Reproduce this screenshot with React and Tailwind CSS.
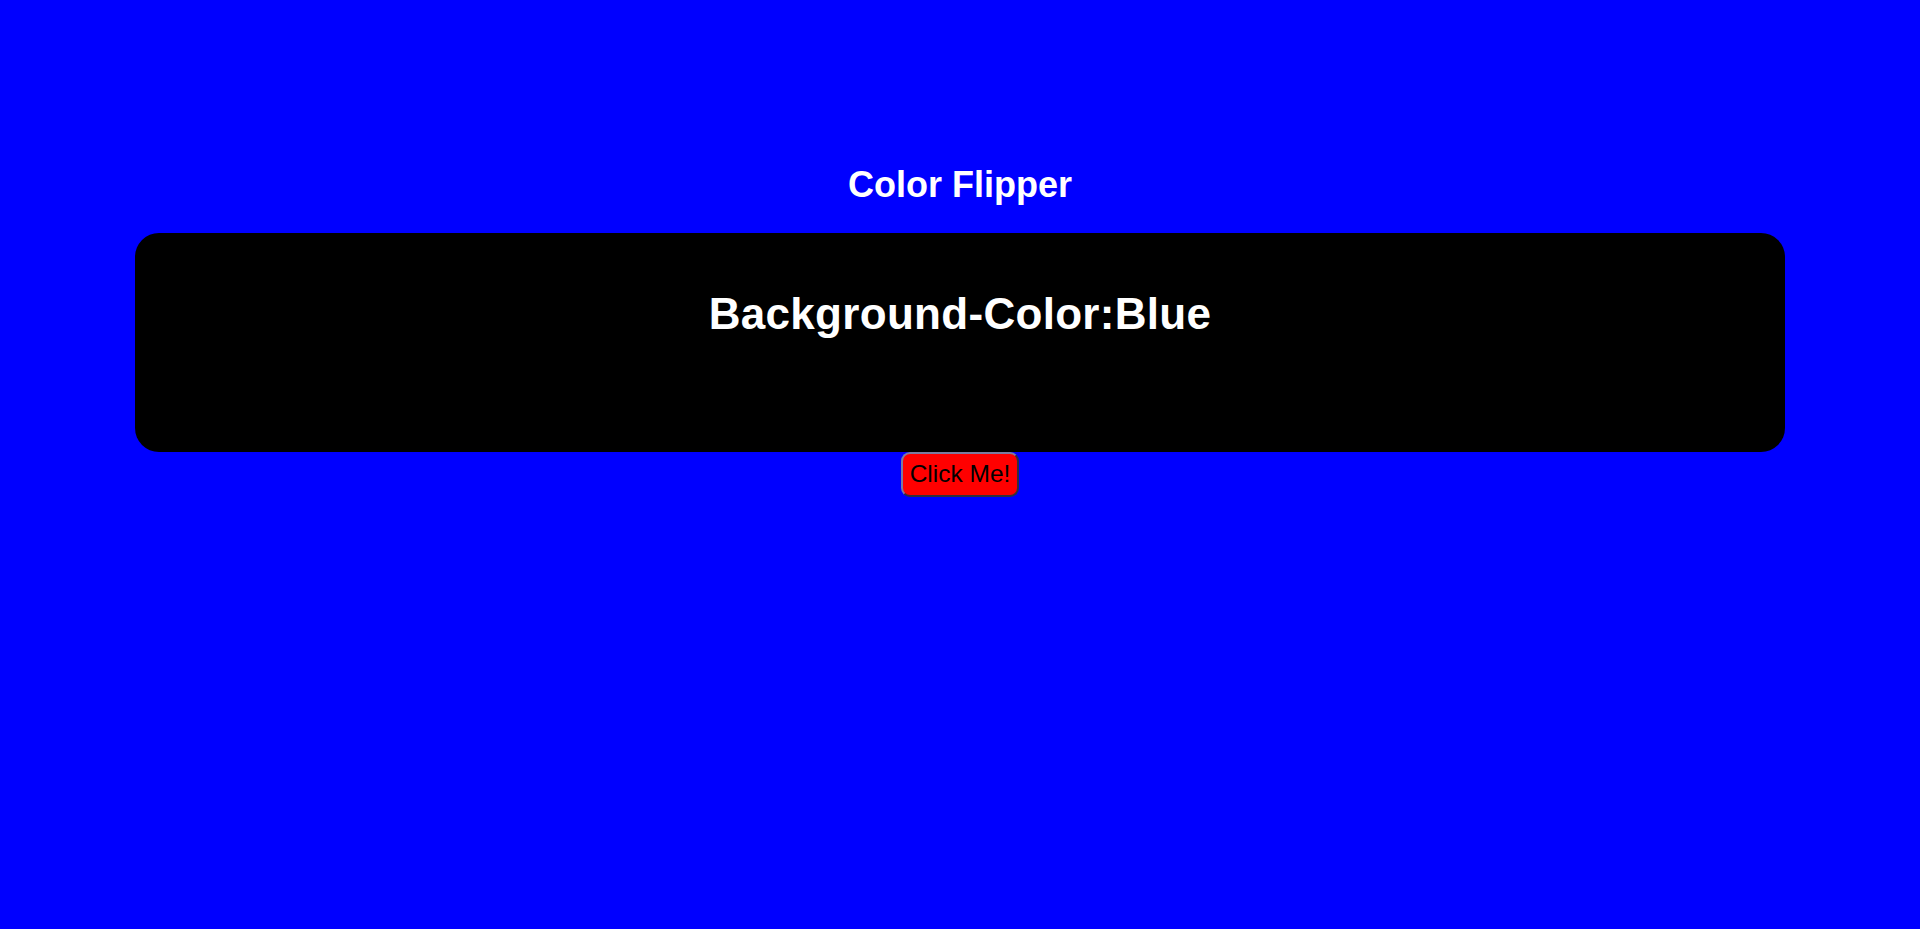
import React from "react";

export default function App() {
  return (
    <div
      className="min-h-[929px] w-full bg-[#0000ff] flex flex-col items-center pt-[164px]"
      style={{ fontFamily: '"Liberation Sans", Arial, sans-serif' }}
    >
      <h1 className="text-white font-bold text-[36px] leading-[41px] m-0">Color Flipper</h1>
      <div className="mt-[28px] w-[1650px] h-[219px] bg-black rounded-[24px] flex justify-center pt-[56px]">
        <h2 className="text-white font-bold text-[44px] leading-[50px] tracking-[0.3px] m-0 h-[50px]">Background-Color:Blue</h2>
      </div>
      <button className="h-[45px] w-[118px] bg-[#ff0000] text-black text-[24.5px] leading-[28px] rounded-[9px] border-2 border-t-[#7c7ca0] border-l-[#7c7ca0] border-r-[#30303c] border-b-[#30303c] flex items-center justify-center pb-[1px]">
        Click Me!
      </button>
    </div>
  );
}
